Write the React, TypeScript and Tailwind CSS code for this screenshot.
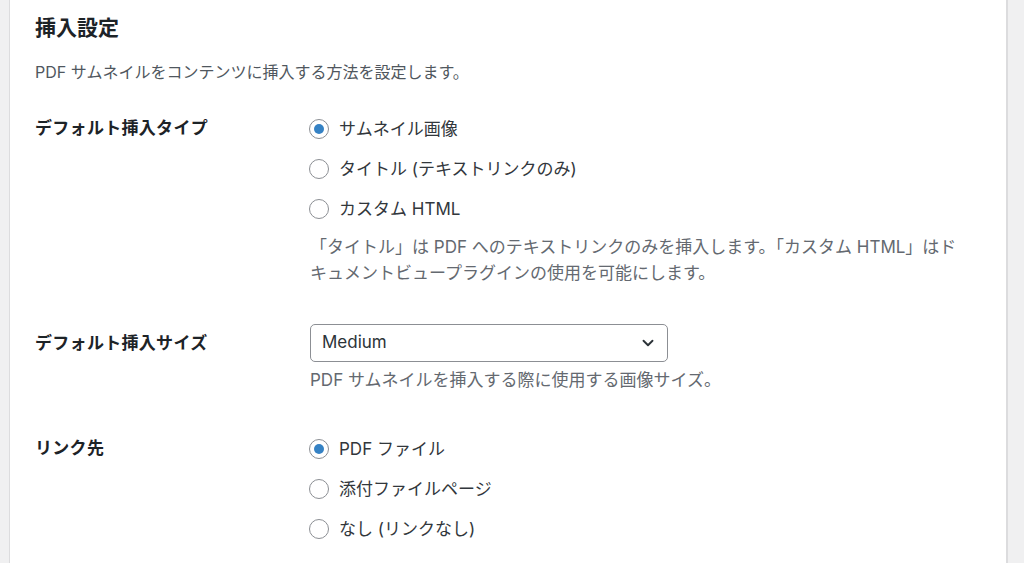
import { ChevronDown } from "lucide-react";

const FONT = "font-['Inter','Noto_Sans_CJK_JP',sans-serif]";

type Option = { label: string; checked?: boolean };

const insertTypes: Option[] = [
  { label: "サムネイル画像", checked: true },
  { label: "タイトル (テキストリンクのみ)" },
  { label: "カスタム HTML" },
];

const linkTargets: Option[] = [
  { label: "PDF ファイル", checked: true },
  { label: "添付ファイルページ" },
  { label: "なし (リンクなし)" },
];

function Radio({ label, checked }: Option) {
  return (
    <label className="flex h-[40px] items-center">
      <span className="mr-[10px] flex size-[20px] shrink-0 items-center justify-center rounded-full border border-[#8c8f94] bg-white">
        {checked && <span className="size-[10px] rounded-full bg-[#3582c4]" />}
      </span>
      <span className="text-[17px] leading-[24px] text-[#32373c]">{label}</span>
    </label>
  );
}

function RowLabel({ children }: { children: string }) {
  return (
    <div className="w-[274px] shrink-0 text-[17px] font-semibold leading-[38px] tracking-[0.3px] text-[#1d2327]">
      {children}
    </div>
  );
}

export default function App() {
  return (
    <div className={`flex h-[563px] w-full overflow-hidden bg-[#f0f0f1] ${FONT}`}>
      <div className="ml-[9px] w-[999px] border-r-2 border-l border-[#dcdcde] bg-white pl-[25px]">
        <h2 className="pt-[14px] text-[21px] font-semibold leading-[28px] text-[#1d2327]">
          挿入設定
        </h2>
        <p className="mt-[18px] text-[16px] leading-[24px] text-[#50575e]">
          PDF サムネイルをコンテンツに挿入する方法を設定します。
        </p>

        <div className="mt-[25px] flex">
          <RowLabel>デフォルト挿入タイプ</RowLabel>
          <div>
            {insertTypes.map((o) => (
              <Radio key={o.label} {...o} />
            ))}
            <p className="ml-[1px] mt-[5px] w-[662px] text-[17px] leading-[26px] text-[#646970]">
              「タイトル」は PDF へのテキストリンクのみを挿入します。「カスタム HTML」はドキュメントビュープラグインの使用を可能にします。
            </p>
          </div>
        </div>

        <div className="mt-[38px] flex">
          <RowLabel>デフォルト挿入サイズ</RowLabel>
          <div className="ml-[1px]">
            <div className="flex h-[38px] w-[358px] items-center justify-between rounded-[5px] border border-[#8c8f94] bg-white pl-[11px] pr-[10px]">
              <span className="text-[17px] text-[#2c3338]">Medium</span>
              <ChevronDown className="size-[18px] text-[#2c3338]" strokeWidth={2.5} />
            </div>
            <p className="mt-[5px] text-[17px] leading-[26px] text-[#646970]">
              PDF サムネイルを挿入する際に使用する画像サイズ。
            </p>
          </div>
        </div>

        <div className="mt-[36px] flex">
          <RowLabel>リンク先</RowLabel>
          <div>
            {linkTargets.map((o) => (
              <Radio key={o.label} {...o} />
            ))}
          </div>
        </div>
      </div>
    </div>
  );
}
